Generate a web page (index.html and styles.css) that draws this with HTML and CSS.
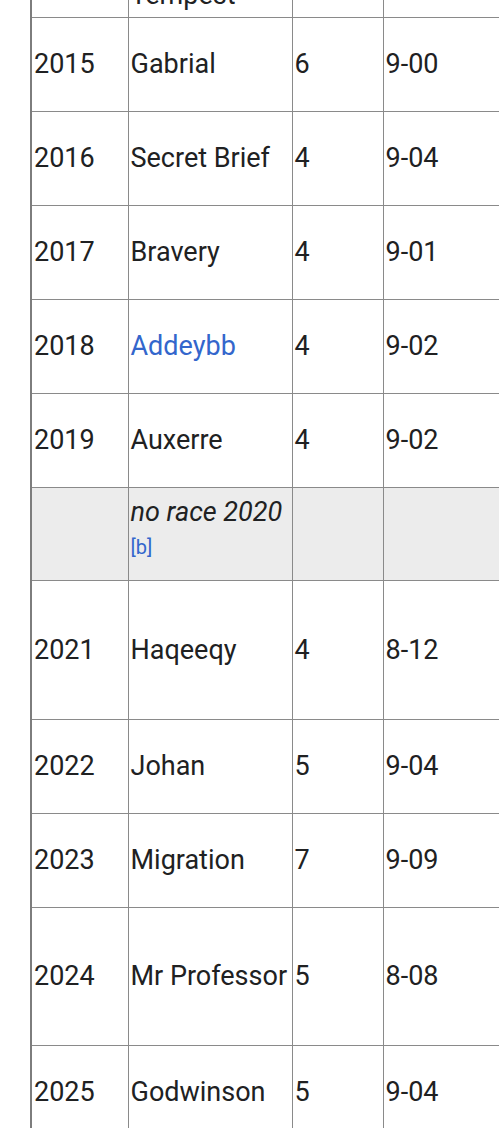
FILE: index.html
```html
<!DOCTYPE html>
<html>
<head>
<meta charset="utf-8">
<link rel="stylesheet" href="styles.css">
</head>
<body>
<div class="viewport">
  <table class="winners">
    <colgroup>
      <col class="c-year">
      <col class="c-horse">
      <col class="c-age">
      <col class="c-weight">
      <col class="c-rest">
    </colgroup>
    <tbody>
      <tr class="r-first"><td>2014</td><td class="bottom">Ocean Tempest</td><td>5</td><td>9-03</td><td></td></tr>
      <tr class="r-norm"><td>2015</td><td>Gabrial</td><td>6</td><td>9-00</td><td></td></tr>
      <tr class="r-norm"><td>2016</td><td>Secret Brief</td><td>4</td><td>9-04</td><td></td></tr>
      <tr class="r-norm"><td>2017</td><td>Bravery</td><td>4</td><td>9-01</td><td></td></tr>
      <tr class="r-norm"><td>2018</td><td><a href="#">Addeybb</a></td><td>4</td><td>9-02</td><td></td></tr>
      <tr class="r-norm"><td>2019</td><td>Auxerre</td><td>4</td><td>9-02</td><td></td></tr>
      <tr class="r-none"><td></td><td><i>no race 2020</i> <sup class="ref"><a href="#">[b]</a></sup></td><td></td><td></td><td></td></tr>
      <tr class="r-tall"><td>2021</td><td>Haqeeqy</td><td>4</td><td>8-12</td><td></td></tr>
      <tr class="r-norm"><td>2022</td><td>Johan</td><td>5</td><td>9-04</td><td></td></tr>
      <tr class="r-norm"><td>2023</td><td>Migration</td><td>7</td><td>9-09</td><td></td></tr>
      <tr class="r-tall2"><td>2024</td><td>Mr Professor</td><td>5</td><td>8-08</td><td></td></tr>
      <tr class="r-norm"><td>2025</td><td>Godwinson</td><td>5</td><td>9-04</td><td></td></tr>
    </tbody>
  </table>
</div>
</body>
</html>
```

FILE: styles.css
```css
html, body {
  margin: 0;
  padding: 0;
  background: #ffffff;
  overflow: hidden;
}

.viewport {
  width: 499px;
  height: 1128px;
  overflow: hidden;
  padding-left: 30px;
  box-sizing: border-box;
}

.winners {
  border-collapse: collapse;
  table-layout: fixed;
  width: 700px;
  margin-top: -77px;
  font-family: Roboto, "Liberation Sans", sans-serif;
  font-size: 27px;
  line-height: 1.6;
  color: #202122;
  border-left: 2px solid #7d7d7d;
}

.c-year { width: 97px; }
.c-horse { width: 164px; }
.c-age { width: 91px; }
.c-weight { width: 140px; }
.c-rest { width: 208px; }

.winners td {
  border: 1px solid #8a8a8a;
  padding: 3px 2px;
  vertical-align: middle;
  white-space: normal;
}

.winners td:first-child {
  border-left: 2px solid #7d7d7d;
}

.winners td.bottom {
  vertical-align: bottom;
  padding-bottom: 0;
}

.r-first { height: 94px; }
.r-norm { height: 94px; }
.r-none { height: 93px; }
.r-tall { height: 139px; }
.r-tall2 { height: 138px; }

.r-none td {
  background: #ececec;
}

.winners a {
  color: #3366cc;
  text-decoration: none;
}

.ref {
  font-size: 20px;
  line-height: 1;
}
```
